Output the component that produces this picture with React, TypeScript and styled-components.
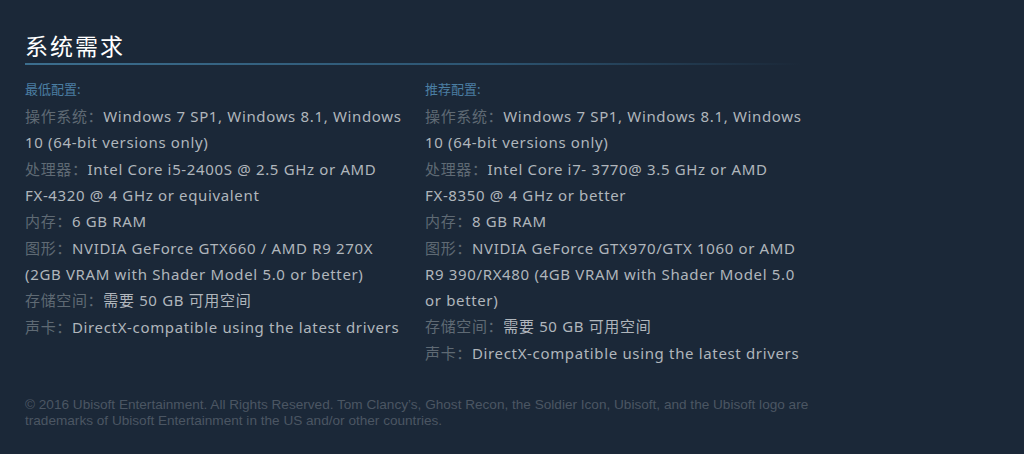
import React from "react";
import styled, { createGlobalStyle } from "styled-components";

const GlobalStyle = createGlobalStyle`
  html, body {
    margin: 0;
    padding: 0;
    background: #1b2838;
  }
  body {
    font-family: "Noto Sans", "Noto Sans CJK SC", sans-serif;
  }
`;

const Page = styled.div`
  width: 1024px;
  height: 454px;
  box-sizing: border-box;
  padding: 32px 0 0 25px;
  background: #1b2838;
  overflow: hidden;
`;

const Heading = styled.h2`
  margin: 0;
  width: 775px;
  padding-bottom: 4px;
  font-family: "Noto Sans CJK SC", sans-serif;
  font-size: 23px;
  font-weight: 400;
  line-height: 27px;
  letter-spacing: 2px;
  color: #ffffff;
  border-bottom: 2px solid;
  border-image: linear-gradient(to right, #3c6e8e 0%, #2d5572 60%, #1b2838 100%) 1;
`;

const Columns = styled.div`
  display: grid;
  grid-template-columns: 400px 400px;
  margin-top: 14px;
`;

const Column = styled.div`
  padding-right: 15px;
`;

const Tier = styled.div`
  font-family: "Noto Sans CJK SC", sans-serif;
  font-size: 13px;
  line-height: 20px;
  color: #4b7fa3;
  margin-bottom: 4px;
`;

const List = styled.ul`
  list-style: none;
  margin: 0;
  padding: 0;
`;

const Item = styled.li`
  font-size: 15px;
  line-height: 26px;
  letter-spacing: 0.65px;
  color: #b0b6bc;
  margin-bottom: 0.6px;
`;

const Label = styled.span`
  font-family: "Noto Sans CJK SC", sans-serif;
  color: #5f6a74;
`;

const Token = styled.span`
  white-space: nowrap;
`;

const Legal = styled.p`
  margin: 30px 0 0;
  width: 800px;
  font-family: "Liberation Sans", Arial, sans-serif;
  font-size: 13.6px;
  line-height: 16px;
  color: #4b5663;
`;

type Spec = { label: string; value: string };

const minimum: Spec[] = [
  { label: "操作系统：", value: "Windows 7 SP1, Windows 8.1, Windows 10 (64-bit versions only)" },
  { label: "处理器：", value: "Intel Core i5-2400S @ 2.5 GHz or AMD FX-4320 @ 4 GHz or equivalent" },
  { label: "内存：", value: "6 GB RAM" },
  { label: "图形：", value: "NVIDIA GeForce GTX660 / AMD R9 270X (2GB VRAM with Shader Model 5.0 or better)" },
  { label: "存储空间：", value: "需要 50 GB 可用空间" },
  { label: "声卡：", value: "DirectX-compatible using the latest drivers" },
];

const recommended: Spec[] = [
  { label: "操作系统：", value: "Windows 7 SP1, Windows 8.1, Windows 10 (64-bit versions only)" },
  { label: "处理器：", value: "Intel Core i7- 3770@ 3.5 GHz or AMD FX-8350 @ 4 GHz or better" },
  { label: "内存：", value: "8 GB RAM" },
  { label: "图形：", value: "NVIDIA GeForce GTX970/GTX 1060 or AMD R9 390/RX480 (4GB VRAM with Shader Model 5.0 or better)" },
  { label: "存储空间：", value: "需要 50 GB 可用空间" },
  { label: "声卡：", value: "DirectX-compatible using the latest drivers" },
];

// keep hyphenated words (FX-4320 etc.) together like the original
function renderValue(value: string) {
  return value.split(" ").map((word, i) => (
    <React.Fragment key={i}>
      {i > 0 && " "}
      {word.includes("-") ? <Token>{word}</Token> : word}
    </React.Fragment>
  ));
}

function SpecColumn({ title, specs }: { title: string; specs: Spec[] }) {
  return (
    <Column>
      <Tier>{title}</Tier>
      <List>
        {specs.map((s) => (
          <Item key={s.label}>
            <Label>{s.label}</Label>
            {renderValue(s.value)}
          </Item>
        ))}
      </List>
    </Column>
  );
}

export default function App() {
  return (
    <Page>
      <GlobalStyle />
      <Heading>系统需求</Heading>
      <Columns>
        <SpecColumn title="最低配置:" specs={minimum} />
        <SpecColumn title="推荐配置:" specs={recommended} />
      </Columns>
      <Legal>
        © 2016 Ubisoft Entertainment. All Rights Reserved. Tom Clancy’s, Ghost Recon, the Soldier Icon, Ubisoft, and the
        Ubisoft logo are trademarks of Ubisoft Entertainment in the US and/or other countries.
      </Legal>
    </Page>
  );
}
